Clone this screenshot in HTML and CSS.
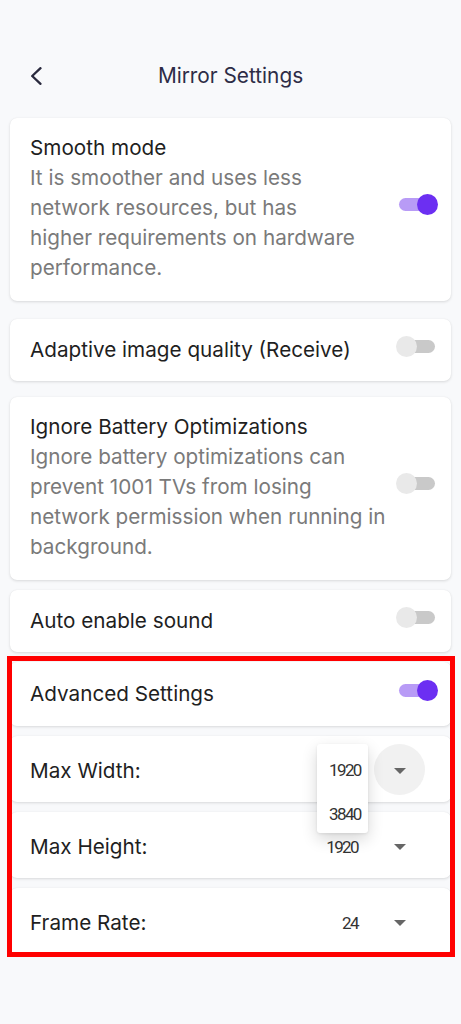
FILE: index.html
```html
<!DOCTYPE html>
<html lang="en">
<head>
<meta charset="utf-8">
<meta name="viewport" content="width=device-width, initial-scale=1">
<title>Mirror Settings</title>
<link rel="stylesheet" href="styles.css">
</head>
<body>
<div class="screen">
  <header class="topbar">
    <button class="back" aria-label="Back">
      <svg width="14" height="18" viewBox="0 0 14 18" aria-hidden="true">
        <path d="M11.5 1.2 L3.2 9 L11.5 16.8" fill="none" stroke="#2a2a3e" stroke-width="2.3" stroke-linecap="round" stroke-linejoin="round"/>
      </svg>
    </button>
    <h1 class="title">Mirror Settings</h1>
    <span class="spacer"></span>
  </header>

  <main class="list">
    <section class="card card-multi">
      <div class="text">
        <div class="label">Smooth mode</div>
        <p class="desc">It is smoother and uses less<br>network resources, but has<br>higher requirements on hardware<br>performance.</p>
      </div>
      <span class="switch on"><span class="track"></span><span class="thumb"></span></span>
    </section>

    <section class="card card-single spaced">
      <div class="text"><div class="label">Adaptive image quality (Receive)</div></div>
      <span class="switch"><span class="track"></span><span class="thumb"></span></span>
    </section>

    <section class="card card-multi spaced-sm">
      <div class="text">
        <div class="label">Ignore Battery Optimizations</div>
        <p class="desc">Ignore battery optimizations can<br>prevent 1001 TVs from losing<br>network permission when running in<br>background.</p>
      </div>
      <span class="switch"><span class="track"></span><span class="thumb"></span></span>
    </section>

    <section class="card card-single">
      <div class="text"><div class="label">Auto enable sound</div></div>
      <span class="switch"><span class="track"></span><span class="thumb"></span></span>
    </section>

    <div class="advanced-group">
      <section class="card card-head">
        <div class="text"><div class="label">Advanced Settings</div></div>
        <span class="switch on"><span class="track"></span><span class="thumb"></span></span>
      </section>

      <section class="card card-select">
        <div class="label grow">Max Width:</div>
        <span class="value covered">1920</span>
        <span class="drop pressed"><span class="caret"></span></span>
        <ul class="menu">
          <li class="menu-item">1920</li>
          <li class="menu-item">3840</li>
        </ul>
      </section>

      <section class="card card-select">
        <div class="label grow">Max Height:</div>
        <span class="value">1920</span>
        <span class="drop"><span class="caret"></span></span>
      </section>

      <section class="card card-select">
        <div class="label grow">Frame Rate:</div>
        <span class="value">24</span>
        <span class="drop"><span class="caret"></span></span>
      </section>
    </div>
  </main>
</div>
</body>
</html>
```

FILE: styles.css
```css
* { box-sizing: border-box; }

html, body {
  margin: 0;
  padding: 0;
  background: #f8f9fb;
}

body {
  font-family: Inter, "Liberation Sans", sans-serif;
  color: #1f1f1f;
  width: 461px;
  height: 1024px;
  overflow: hidden;
}

.screen {
  display: flex;
  flex-direction: column;
}

/* ---------- top bar ---------- */
.topbar {
  display: grid;
  grid-template-columns: 1fr auto 1fr;
  align-items: center;
  height: 36px;
  margin-top: 58px;
  padding: 0 29px;
}

.back {
  justify-self: start;
  display: flex;
  align-items: center;
  justify-content: center;
  width: 14px;
  height: 18px;
  padding: 0;
  border: 0;
  background: none;
}

.title {
  margin: 0;
  font-size: 20.8px;
  font-weight: 400;
  line-height: 36px;
  color: #2d2c46;
}

/* ---------- list ---------- */
.list {
  display: flex;
  flex-direction: column;
  gap: 10px;
  padding: 24px 10px 0 10px;
}

.card {
  position: relative;
  display: flex;
  align-items: center;
  background: #ffffff;
  border-radius: 7px;
  box-shadow: 0 1px 3px rgba(0, 0, 0, 0.13), 0 0 1px rgba(0, 0, 0, 0.06);
  padding: 0 13px 0 20px;
}

.card.spaced { margin-top: 8px; }
.card.spaced-sm { margin-top: 6px; }

.card-multi { padding-top: 15px; padding-bottom: 18px; }
.card-single { padding-top: 16px; padding-bottom: 16px; }
.card-head { padding-top: 17px; padding-bottom: 17px; }
.card-select { padding: 8px 26px 7px 20px; }

.text {
  flex: 1;
  min-width: 0;
}

.label {
  font-size: 20.7px;
  line-height: 30px;
  color: #1f1f1f;
  white-space: nowrap;
}

.grow { flex: 1; }

.card-select .label,
.card-select .value { margin-top: 3px; }

.desc {
  margin: 0;
  font-size: 20.7px;
  line-height: 30px;
  color: #7a7a7a;
}

/* ---------- switch ---------- */
.switch {
  position: relative;
  flex: none;
  width: 42px;
  height: 21px;
  margin-bottom: 7px;
}

.switch .track {
  position: absolute;
  left: 3px;
  right: 3px;
  top: 4px;
  height: 13px;
  border-radius: 7px;
  background: #c9c9c9;
}

.switch .thumb {
  position: absolute;
  top: 0;
  left: 0;
  width: 21px;
  height: 21px;
  border-radius: 50%;
  background: #e9e9e9;
}

.switch.on .track { background: #b89bf6; }
.switch.on .thumb {
  left: auto;
  right: 0;
  background: #6c2ff2;
}

/* ---------- select rows ---------- */
.value {
  font-family: Roboto, "Liberation Sans", sans-serif;
  font-size: 17px;
  letter-spacing: -1.6px;
  color: #333333;
  margin-right: 16px;
  line-height: 30px;
}

.value.covered { visibility: hidden; }

.drop {
  display: flex;
  align-items: center;
  justify-content: center;
  width: 51px;
  height: 51px;
  border-radius: 50%;
  flex: none;
}

.drop.pressed { background: #f1f1f1; }

.caret {
  width: 0;
  height: 0;
  border-left: 6px solid transparent;
  border-right: 6px solid transparent;
  border-top: 6px solid #666666;
  margin-top: 2px;
}

.menu {
  position: absolute;
  left: 307px;
  top: 8px;
  z-index: 2;
  width: 51px;
  height: 89px;
  margin: 0;
  padding: 4px 0 0 0;
  list-style: none;
  background: #ffffff;
  border-radius: 3px;
  box-shadow: 0 6px 16px rgba(0, 0, 0, 0.16), 0 1px 3px rgba(0, 0, 0, 0.08);
}

.menu-item {
  height: 44px;
  line-height: 44px;
  padding-left: 12px;
  font-family: Roboto, "Liberation Sans", sans-serif;
  font-size: 17px;
  letter-spacing: -1.6px;
  color: #333333;
}

/* ---------- highlighted group (red annotation frame) ---------- */
.advanced-group {
  position: relative;
  display: flex;
  flex-direction: column;
  gap: 10px;
}

.advanced-group::after {
  content: "";
  position: absolute;
  top: -6px;
  bottom: -3px;
  left: -3px;
  right: -4px;
  border: 5px solid #ff0000;
  pointer-events: none;
  z-index: 3;
}
```
